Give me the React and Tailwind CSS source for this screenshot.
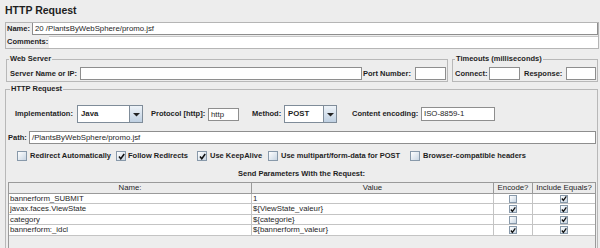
import React from "react";

const Box = ({ checked, size = "w-[10px] h-[10px]" }) => (
  <span className={`${size} shrink-0 border border-[#8899aa] bg-linear-to-br from-[#ffffff] to-[#c9d6e3] flex items-center justify-center`}>
    {checked && (
      <svg width="7" height="7" viewBox="0 0 7 7">
        <path d="M1 3.5 L2.8 5.8 L6.2 1" stroke="#111" strokeWidth="1.5" fill="none" />
      </svg>
    )}
  </span>
);

const Combo = ({ value, w }) => (
  <div className={`flex h-[18px] border border-[#7f8c99] bg-white ${w}`}>
    <span className="flex-1 pl-[3px] leading-[16px] text-[7.8px] font-bold">{value}</span>
    <span className="w-[13px] border-l border-[#7f8c99] bg-linear-to-b from-[#eef3f8] to-[#bfd0e2] flex items-center justify-center">
      <svg width="7" height="5" viewBox="0 0 7 5">
        <path d="M0 1 H7 L3.5 4.5 Z" fill="#222" />
      </svg>
    </span>
  </div>
);

const Input = ({ w, value = "", h = "h-[13px]" }) => (
  <span className={`${w} ${h} shrink-0 bg-white border border-[#8e8e8e] pl-[2px] text-[7.8px] leading-[11px] whitespace-nowrap overflow-hidden`}>
    {value}
  </span>
);

const rows = [
  { name: "bannerform_SUBMIT", value: "1", enc: false, eq: true, h: "h-[10px]" },
  { name: "javax.faces.ViewState", value: "${ViewState_valeur}", enc: true, eq: true, h: "h-[11px]" },
  { name: "category", value: "${categorie}", enc: false, eq: true, h: "h-[10px]" },
  { name: "bannerform:_idcl", value: "${bannerform_valeur}", enc: true, eq: true, h: "h-[11px]" },
];

export default function App() {
  return (
    <div className="w-[600px] h-[248px] overflow-hidden bg-[#ededed] text-[#1e1e1e] font-['Liberation_Sans',Arial,sans-serif] flex flex-col">
      <div className="pl-[5px] pt-[3px] h-[22px] shrink-0 text-[10.5px] font-bold leading-[14px]">HTTP Request</div>

      <div className="ml-[5px] w-[594px] shrink-0 border border-[#b5b5b5] flex flex-col">
        <div className="flex h-[12px]">
          <span className="w-[26px] pl-[1px] text-[7.5px] font-bold leading-[12px]">Name:</span>
          <span className="flex-1 bg-white border-x border-b border-[#8e8e8e] pl-[2px] text-[7.8px] leading-[11px]">20 /PlantsByWebSphere/promo.jsf</span>
        </div>
        <div className="flex h-[12px] mt-[1px]">
          <span className="w-[43px] pl-[1px] text-[7.5px] font-bold leading-[12px]">Comments:</span>
          <span className="flex-1 bg-white border-t border-[#c8c8c8]"></span>
        </div>
      </div>

      <div className="flex mt-[6px] shrink-0">
        <fieldset className="ml-[6px] w-[442px] border border-[#b8b8b8] pb-[1px]">
          <legend className="ml-[2px] px-[1px] text-[7.5px] font-bold leading-[8px]">Web Server</legend>
          <div className="flex items-center mt-[4px] pl-[3px]">
            <span className="w-[70px] text-[7.5px] font-bold">Server Name or IP:</span>
            <Input w="w-[282px]" />
            <span className="ml-[1px] w-[52px] text-[7.5px] font-bold">Port Number:</span>
            <Input w="w-[31px]" />
          </div>
        </fieldset>
        <fieldset className="ml-[4px] w-[146px] border border-[#b8b8b8] pb-[1px]">
          <legend className="ml-[2px] px-[1px] text-[7.5px] font-bold leading-[8px]">Timeouts (milliseconds)</legend>
          <div className="flex items-center mt-[4px] pl-[2px]">
            <span className="w-[34px] text-[7.5px] font-bold">Connect:</span>
            <Input w="w-[31px]" />
            <span className="ml-[4px] w-[42px] text-[7.5px] font-bold">Response:</span>
            <Input w="w-[30px]" />
          </div>
        </fieldset>
      </div>

      <fieldset className="ml-[5px] mt-[3px] w-[593px] h-[200px] shrink-0 border border-[#b8b8b8]">
        <legend className="ml-[4px] px-[1px] text-[7.5px] font-bold leading-[8px]">HTTP Request</legend>
        <div className="flex items-center mt-[12px] pl-[9px] h-[18px]">
          <span className="w-[62px] text-[7.5px] font-bold">Implementation:</span>
          <Combo value="Java" w="w-[66px]" />
          <span className="ml-[8px] w-[57px] text-[7.5px] font-bold">Protocol [http]:</span>
          <Input w="w-[31px]" value="http" />
          <span className="ml-[13px] w-[32px] text-[7.5px] font-bold">Method:</span>
          <Combo value="POST" w="w-[53px]" />
          <span className="ml-[15px] w-[69px] text-[7.5px] font-bold">Content encoding:</span>
          <Input w="w-[74px]" h="h-[14px]" value="ISO-8859-1" />
        </div>
        <div className="flex items-center mt-[8px] pl-[2px] pr-[1px]">
          <span className="w-[21px] text-[7.5px] font-bold">Path:</span>
          <span className="flex-1 h-[13px] bg-white border border-[#8e8e8e] pl-[2px] text-[7.8px] leading-[11px]">/PlantsByWebSphere/promo.jsf</span>
        </div>
        <div className="flex items-center mt-[7px] pl-[11px] h-[10px] text-[7.5px] font-bold">
          <span className="w-[99px] flex items-center gap-[3px]"><Box />Redirect Automatically</span>
          <span className="w-[81px] flex items-center gap-[2px]"><Box checked />Follow Redirects</span>
          <span className="w-[71px] flex items-center gap-[3px]"><Box checked />Use KeepAlive</span>
          <span className="w-[142px] flex items-center gap-[3px]"><Box />Use multipart/form-data for POST</span>
          <span className="flex items-center gap-[3px]"><Box />Browser-compatible headers</span>
        </div>
        <div className="mt-[8px] text-center text-[7.5px] font-bold leading-[9px]">Send Parameters With the Request:</div>
        <div className="ml-[2px] mt-[4px] w-[588px] h-[80px] border border-[#9a9a9a] bg-[#ededed]">
          <div className="flex h-[11px] bg-[#ececec] border-b border-[#9a9a9a] text-[7.8px] leading-[10px]">
            <span className="w-[243px] border-r border-[#9a9a9a] text-center">Name:</span>
            <span className="w-[242px] border-r border-[#9a9a9a] text-center">Value</span>
            <span className="w-[39px] border-r border-[#9a9a9a] text-center">Encode?</span>
            <span className="w-[62px] text-center">Include Equals?</span>
          </div>
          {rows.map((r, i) => (
            <div key={i} className={`flex ${r.h} bg-white border-b border-[#c4c4c4] text-[7.8px] leading-[9px]`}>
              <span className="w-[243px] border-r border-[#c4c4c4] pl-[1px]">{r.name}</span>
              <span className="w-[242px] border-r border-[#c4c4c4] pl-[1px]">{r.value}</span>
              <span className="w-[39px] border-r border-[#c4c4c4] flex items-center justify-center"><Box checked={r.enc} size="w-[8px] h-[8px]" /></span>
              <span className="w-[62px] flex items-center justify-center"><Box checked={r.eq} size="w-[8px] h-[8px]" /></span>
            </div>
          ))}
        </div>
      </fieldset>
    </div>
  );
}
